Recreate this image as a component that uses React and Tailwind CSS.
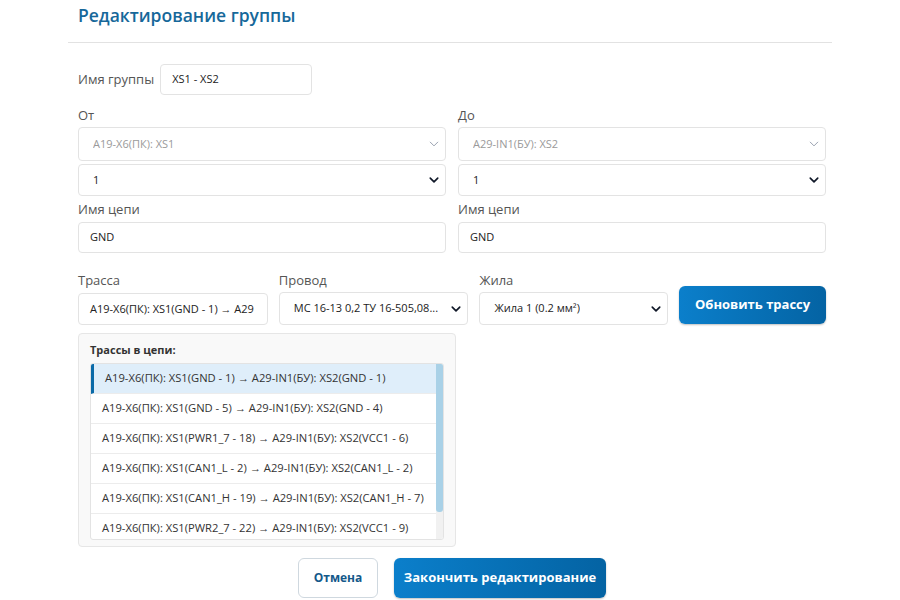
import React from 'react';

const font = { fontFamily: '"Open Sans", "Noto Sans", sans-serif' };

const Chevron = ({ muted }) => (
  <svg width="10" height="10" viewBox="0 0 16 16" className={muted ? 'text-gray-400' : 'text-gray-900'}>
    <path d="M2 5l6 6 6-6" fill="none" stroke="currentColor" strokeWidth={muted ? 1.6 : 2.6} strokeLinecap="round" strokeLinejoin="round" />
  </svg>
);

const FakeSelect = ({ value, muted, className = '' }) => (
  <div
    className={`flex items-center justify-between rounded-[4px] border border-[#e3e3e3] bg-white pl-[14px] pr-[6px] ${className}`}
  >
    <span className={`truncate text-[11px] ${muted ? 'text-[#9a9a9a]' : 'text-[#222]'}`}>{value}</span>
    <Chevron muted={muted} />
  </div>
);

const TextBox = ({ value, className = '' }) => (
  <div className={`flex items-center overflow-hidden whitespace-nowrap rounded-[4px] border border-[#e3e3e3] bg-white px-[11px] text-[11px] text-[#222] ${className}`}>
    {value}
  </div>
);

const Label = ({ children, className = '' }) => (
  <div className={`text-[13px] leading-[18px] text-[#555] ${className}`}>{children}</div>
);

const routes = [
  'A19-X6(ПК): XS1(GND - 1) → A29-IN1(БУ): XS2(GND - 1)',
  'A19-X6(ПК): XS1(GND - 5) → A29-IN1(БУ): XS2(GND - 4)',
  'A19-X6(ПК): XS1(PWR1_7 - 18) → A29-IN1(БУ): XS2(VCC1 - 6)',
  'A19-X6(ПК): XS1(CAN1_L - 2) → A29-IN1(БУ): XS2(CAN1_L - 2)',
  'A19-X6(ПК): XS1(CAN1_H - 19) → A29-IN1(БУ): XS2(CAN1_H - 7)',
  'A19-X6(ПК): XS1(PWR2_7 - 22) → A29-IN1(БУ): XS2(VCC1 - 9)',
];

const EndPoint = ({ title, connector }) => (
  <div className="flex flex-col">
    <Label className="mb-[3px]">{title}</Label>
    <FakeSelect value={connector} muted className="h-[34px]" />
    <FakeSelect value="1" className="mt-[3px] h-[32px]" />
    <Label className="mt-[4px] mb-[4px]">Имя цепи</Label>
    <TextBox value="GND" className="h-[31px]" />
  </div>
);

export default function App() {
  return (
    <div className="min-h-[600px] w-[900px] bg-white" style={font}>
      <div className="mx-[68px]">
        <h2 className="pl-[10px] pt-[3px] text-[17.5px] font-semibold leading-[24px] text-[#16689a]">
          Редактирование группы
        </h2>
        <div className="mt-[15px] border-t border-[#e2e2e2]" />

        <div className="pl-[10px] pr-[6px]">
          <div className="mt-[21px] flex items-center gap-[6px]">
            <span className="text-[13px] text-[#555]">Имя группы</span>
            <TextBox value="XS1 - XS2" className="h-[31px] w-[152px]" />
          </div>

          <div className="mt-[11px] grid grid-cols-2 gap-x-[12px]">
            <EndPoint title="От" connector="A19-X6(ПК): XS1" />
            <EndPoint title="До" connector="A29-IN1(БУ): XS2" />
          </div>

          <div className="mt-[18px] flex items-end gap-[11px]">
            <div className="w-[190px]">
              <Label className="mb-[4px]">Трасса</Label>
              <TextBox value="A19-X6(ПК): XS1(GND - 1) → A29" className="h-[32px]" />
            </div>
            <div className="w-[190px]">
              <Label className="mb-[3px]">Провод</Label>
              <FakeSelect value="МС 16-13 0,2 ТУ 16-505,08..." className="h-[33px]" />
            </div>
            <div className="w-[189px]">
              <Label className="mb-[3px]">Жила</Label>
              <FakeSelect value="Жила 1 (0.2 мм²)" className="h-[33px]" />
            </div>
            <button className="mb-[1px] h-[38px] w-[147px] rounded-[6px] bg-gradient-to-r from-[#0b7fcb] to-[#0463a3] text-[13px] font-bold text-white shadow-[0_1px_2px_rgba(0,0,0,0.25)]">
              Обновить трассу
            </button>
          </div>

          <div className="mt-[8px] w-[378px] rounded-[4px] border border-[#e6e6e6] bg-[#f9f9f9] px-[11px] pb-[6px] pt-[8px]">
            <div className="mb-[4px] text-[11px] font-bold text-[#333]">Трассы в цепи:</div>
            <div className="flex h-[177px] overflow-hidden rounded-[3px] border border-[#e3e3e3] bg-white">
              <div className="flex-1">
                {routes.map((r, i) => (
                  <div
                    key={i}
                    className={`flex h-[30px] items-center whitespace-nowrap border-b border-[#ececec] text-[11.2px] text-[#333] ${
                      i === 0 ? 'border-l-[3px] border-l-[#0a6aa8] bg-[#dfeefa] pl-[11px]' : 'pl-[11px]'
                    }`}
                  >
                    {r}
                  </div>
                ))}
              </div>
              <div className="w-[7px] bg-[#f1f1f1]">
                <div className="h-[148px] rounded-b-[3px] bg-[#a9d1e7]" />
              </div>
            </div>
          </div>

          <div className="mt-[11px] flex justify-center gap-[16px]">
            <button className="h-[40px] w-[80px] rounded-[6px] border border-[#cfd8df] bg-white text-[12px] font-bold text-[#14598a]">
              Отмена
            </button>
            <button className="h-[40px] w-[212px] rounded-[6px] bg-gradient-to-r from-[#0b7fcb] to-[#0463a3] text-[13px] font-bold text-white shadow-[0_1px_2px_rgba(0,0,0,0.25)]">
              Закончить редактирование
            </button>
          </div>
        </div>
      </div>
    </div>
  );
}
